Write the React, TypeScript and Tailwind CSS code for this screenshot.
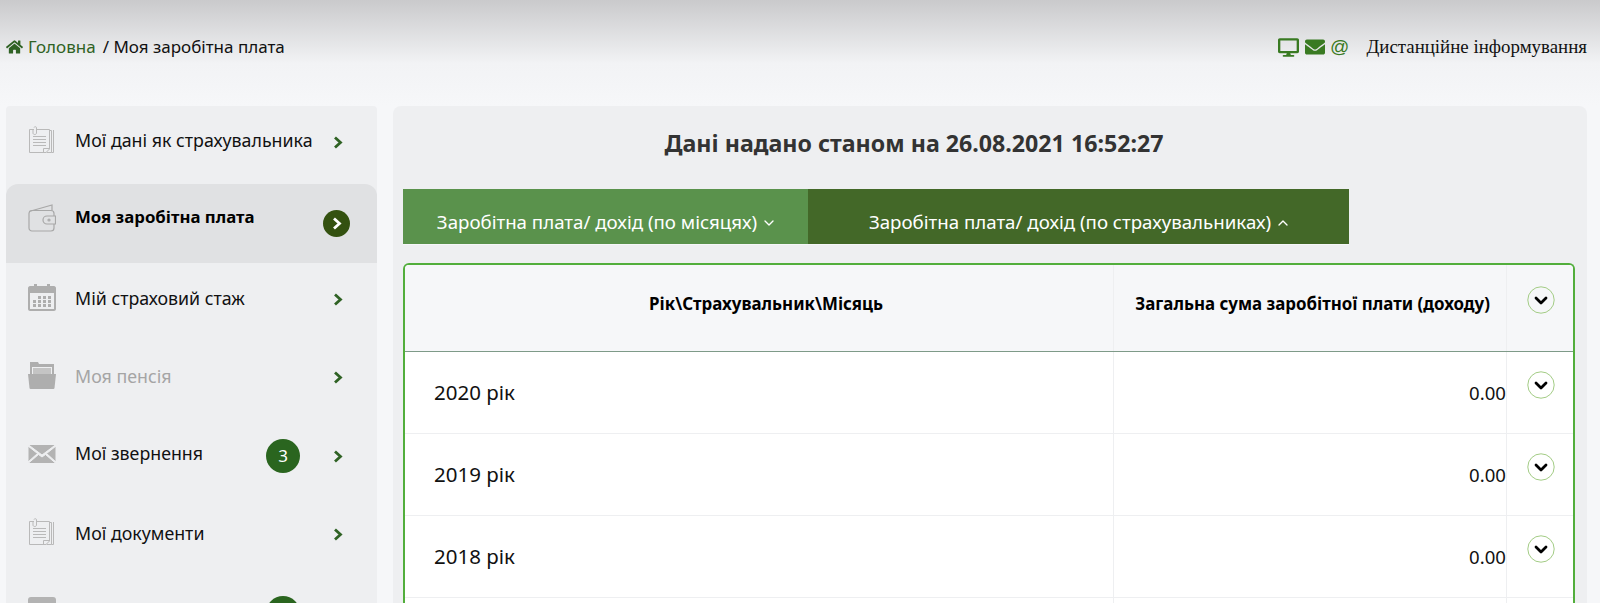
import { FaDesktop, FaEnvelope, FaHome } from 'react-icons/fa';
import { ChevronDown, ChevronUp } from 'lucide-react';

const DocIcon = () => (
  <svg width="28" height="28" viewBox="0 0 28 28" fill="none" stroke="#b9b9b9" strokeWidth="1">
    <path d="M6 3.5H1.5V26.5H18L21.5 23V3.5H9" />
    <path d="M21.5 4.5H23.5V26.5H18.5M25.5 4V26.5H23.5" />
    <path d="M6 1.5C6 .5 8.5 .5 8.5 1.5V7C8.5 9 5 9 5 7V3" />
    <path d="M5 10.5H18M5 13.5H18M5 16.5H18M5 19.5H18" strokeWidth="1.2" />
    <path d="M15.5 26V22.5H21" />
  </svg>
);

const WalletIcon = () => (
  <svg width="28" height="28" viewBox="0 0 28 28" fill="none" stroke="#a8a8a8" strokeWidth="1.2">
    <path d="M1 7.5 24 1V6.5" />
    <rect x="1" y="6.5" width="25" height="20.5" rx="3" />
    <path d="M27.5 12H19a3.5 3.5 0 0 0 0 8h8.5Z" fill="#e0e1e3" />
    <circle cx="21" cy="16" r="1" />
  </svg>
);

const CalendarIcon = () => (
  <svg width="28" height="28" viewBox="0 0 28 28" fill="#aeaeae">
    <path d="M2 3H6V1H9V3H19V1H22V3H26C27 3 28 4 28 5V26C28 27 27 28 26 28H2C1 28 0 27 0 26V5C0 4 1 3 2 3ZM2 10V26H26V10Z" />
    <path d="M5 17h3v3H5zM10 17h3v3h-3zM15 17h3v3h-3zM20 17h3v3h-3zM10 13h3v3h-3zM15 13h3v3h-3zM20 13h3v3h-3zM5 21h3v3H5zM10 21h3v3h-3zM15 21h3v3h-3zM20 21h3v3h-3z" />
  </svg>
);

const FolderIcon = () => (
  <svg width="28" height="28" viewBox="0 0 28 28" fill="#aeaeae">
    <path d="M2 5V1H10L11 3H26V13H24V6H4V13H2Z" />
    <path d="M5 7H23V13H5Z" fill="#c4c4c4" />
    <path d="M0 13H28L26.5 27C26.4 27.6 26 28 25.5 28H2.5C2 28 1.6 27.6 1.5 27Z" />
  </svg>
);

const MailIcon = () => (
  <svg width="28" height="20" viewBox="0 0 28 20" fill="#b3b3b3" stroke="#eeeff1" strokeWidth="1">
    <path d="M0 .5H28L14 11Z" />
    <path d="M0 2 9.5 9.5 0 18Z" />
    <path d="M28 2 18.5 9.5 28 18Z" />
    <path d="M0 19.5 10.5 10.5 14 13 17.5 10.5 28 19.5Z" />
  </svg>
);

const BlankIcon = () => (
  <svg width="28" height="28" viewBox="0 0 28 28" fill="#b3b3b3">
    <rect x="0" y="0" width="28" height="28" rx="3" />
  </svg>
);

const CircleDown = () => (
  <svg width="28" height="28" viewBox="0 0 28 28" fill="none">
    <circle cx="14" cy="14" r="13.2" stroke="#a3cc85" strokeWidth="1" />
    <path d="M9 12 14 17 19 12" stroke="#000" strokeWidth="2.8" strokeLinecap="round" strokeLinejoin="round" />
  </svg>
);

// heavier than the icon font chevrons, same as the reference
const Chevron = ({ color }: { color: string }) => (
  <svg width="10" height="13" viewBox="0 0 10 13" fill="none">
    <path d="M2 1.5 7.5 6.5 2 11.5" stroke={color} strokeWidth="2.8" />
  </svg>
);

const menu = [
  { title: 'Мої дані як страхувальника', icon: <DocIcon />, h: 'h-[78px]', mt: 'mt-[2px]' },
  { title: 'Моя заробітна плата', icon: <WalletIcon />, h: 'h-[79px]', mt: 'mt-[1px]', active: true },
  { title: 'Мій страховий стаж', icon: <CalendarIcon />, h: 'h-[78px]', mt: 'mt-[3px]' },
  { title: 'Моя пенсія', icon: <FolderIcon />, h: 'h-[79px]', mt: 'mt-[3px]', disabled: true },
  { title: 'Мої звернення', icon: <MailIcon />, h: 'h-[78px]', mt: 'mt-[1px]', badge: '3' },
  { title: 'Мої документи', icon: <DocIcon />, h: 'h-[79px]', mt: 'mt-[3px]' },
  { title: '', icon: <BlankIcon />, h: 'h-[78px]', mt: '', badge: ' ' },
];

const years = ['2020 рік', '2019 рік', '2018 рік', ''];

export default function App() {
  return (
    <div className="h-[603px] overflow-hidden bg-[#f6f7f9] font-['Noto_Sans',sans-serif] text-[#111]">
      <div className="h-[106px] bg-gradient-to-b from-[#cacacc] via-[#f2f3f5] via-60% to-[#f6f7f9]">
        <div className="flex items-center justify-between pt-[35px] pl-[6px] pr-[13px]">
          <div className="flex items-center text-[17px] leading-6">
            <FaHome className="mr-[5px] h-[16px] w-[17px] text-[#2f6224]" />
            <span className="text-[#2f6224]">Головна</span>
            <span className="ml-[7px]">/ Моя заробітна плата</span>
          </div>
          <div className="flex items-center">
            <FaDesktop className="h-[19px] w-[21px] text-[#397a22]" />
            <FaEnvelope className="ml-[6px] h-[20px] w-[20px] text-[#397a22]" />
            <span className="ml-[5px] font-['Liberation_Sans',sans-serif] text-[19px] leading-6 text-[#397a22]">@</span>
            <span className="ml-[17px] font-['Liberation_Serif',serif] text-[18.9px] leading-6">Дистанційне інформування</span>
          </div>
        </div>
      </div>

      <div className="flex items-start pl-[6px] pr-[13px]">
        <aside className="h-[497px] w-[371px] shrink-0 rounded-t-[4px] bg-[#eeeff1]">
          {menu.map((item, i) => (
            <div
              key={i}
              className={`relative flex ${item.h} items-start pl-[22px] pt-[20px] ${item.active ? 'rounded-t-[12px] bg-[#e0e1e3]' : ''}`}
            >
              <div className="flex h-[28px] w-[28px] shrink-0 items-center justify-center">{item.icon}</div>
              <span
                className={`ml-[19px] whitespace-nowrap leading-6 ${item.mt} ${item.active ? 'text-[16.8px] font-bold text-black' : 'text-[17.8px]'} ${item.disabled ? 'text-[#a5a5a5]' : ''}`}
              >
                {item.title}
              </span>
              {item.badge && (
                <span className="absolute left-[260px] top-[19px] flex h-[34px] w-[34px] items-center justify-center rounded-full bg-[#2a651f] text-[17px] text-white">
                  {item.badge}
                </span>
              )}
              {item.active ? (
                <span className="absolute left-[317px] top-[26px] flex h-[27px] w-[27px] items-center justify-center rounded-full bg-[#345110]">
                  <Chevron color="#ffffff" />
                </span>
              ) : (
                <span className="absolute left-[327px] top-[30px] flex">
                  <Chevron color="#2f6224" />
                </span>
              )}
            </div>
          ))}
        </aside>

        <main className="ml-[16px] h-[497px] flex-1 rounded-t-[8px] bg-[#eeeff1] pl-[10px] pr-[12px]">
          <h1 className="pr-[150px] pt-[21px] text-center text-[23.2px] font-bold leading-[32px] text-[#333]">
            Дані надано станом на 26.08.2021 16:52:27
          </h1>
          <div className="mt-[30px] flex h-[56px] text-[18.7px] text-white">
            <div className="flex w-[405px] items-center justify-center gap-[4px] border-b border-[#f6f7f9] bg-[#5a924c] pl-[3px] pt-[12px]">
              Заробітна плата/ дохід (по місяцях)
              <ChevronDown className="h-[16px] w-[16px]" strokeWidth={2} />
            </div>
            <div className="flex w-[541px] items-center justify-center gap-[4px] border-b border-[#f6f7f9] bg-[#436828] pl-[3px] pt-[12px]">
              Заробітна плата/ дохід (по страхувальниках)
              <ChevronUp className="h-[16px] w-[16px]" strokeWidth={2} />
            </div>
          </div>
          <div className="mt-[18px] rounded-t-[6px] border-2 border-b-0 border-[#52ae3c] bg-white">
            <div className="flex h-[87px] rounded-t-[4px] border-b border-[#7e9a88] bg-[#f6f7f9] text-[16.9px] font-bold text-black">
              <div className="flex w-[708px] items-center justify-center pb-[8px] pl-[14px]">Рік\Страхувальник\Місяць</div>
              <div className="flex w-[393px] items-center justify-end border-l border-[#eeeff1] pb-[8px] pr-[16px]">
                Загальна сума заробітної плати (доходу)
              </div>
              <div className="flex flex-1 justify-center border-l border-[#eeeff1] pl-[2px] pt-[21px]">
                <CircleDown />
              </div>
            </div>
            {years.map((year) => (
              <div key={year} className="flex h-[82px] border-b border-[#eeeff1]">
                <div className="flex w-[708px] items-center pl-[29px] text-[20.5px]">{year}</div>
                <div className="flex w-[393px] items-center justify-end border-l border-[#eeeff1] text-[18.6px]">
                  {year && '0.00'}
                </div>
                <div className="flex flex-1 justify-center border-l border-[#eeeff1] pl-[2px] pt-[19px]">
                  {year && <CircleDown />}
                </div>
              </div>
            ))}
          </div>
        </main>
      </div>
    </div>
  );
}
